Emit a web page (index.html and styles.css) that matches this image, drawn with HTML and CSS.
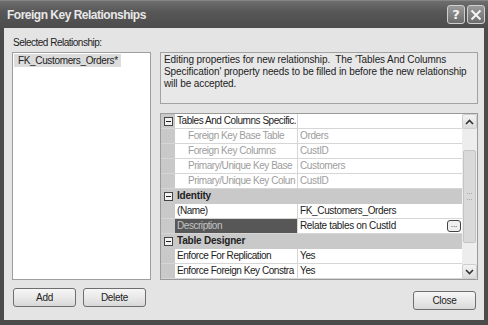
FILE: index.html
```html
<!DOCTYPE html>
<html lang="en">
  <head>
    <meta charset="UTF-8" />
    <title>Foreign Key Relationships</title>
    <link rel="stylesheet" href="styles.css">
  </head>
  <body>
    <div class="window">
      <!-- Barre de titre -->
      <header class="titlebar">
        <span class="title">Foreign Key Relationships</span>
        <div class="caption-buttons">
          <span class="caption-btn">?</span>
          <span class="caption-btn">
            <svg width="12" height="12" viewBox="0 0 12 12">
              <path d="M1.5 1.5 L10.5 10.5 M10.5 1.5 L1.5 10.5" stroke="#f4f4f4" stroke-width="2" fill="none" />
            </svg>
          </span>
        </div>
      </header>
      <!-- Contenu -->
      <main class="client">
        <section class="left-pane">
          <p class="label">Selected Relationship:</p>
          <div class="listbox">
            <div class="list-item">FK_Customers_Orders*</div>
          </div>
          <div class="left-buttons">
            <button class="btn">Add</button>
            <button class="btn">Delete</button>
          </div>
        </section>
        <section class="right-pane">
          <div class="description">
            Editing properties for new relationship.&nbsp; The 'Tables And Columns Specification' property needs to be filled in before the new relationship will be accepted.
          </div>
          <div class="prop-grid">
            <div class="prop-rows">
              <div class="row">
                <span class="gutter"><span class="toggle"></span></span>
                <span class="name">Tables And Columns Specific.</span>
                <span class="value"></span>
              </div>
              <div class="row sub">
                <span class="gutter"></span>
                <span class="name">Foreign Key Base Table</span>
                <span class="value">Orders</span>
              </div>
              <div class="row sub">
                <span class="gutter"></span>
                <span class="name">Foreign Key Columns</span>
                <span class="value">CustID</span>
              </div>
              <div class="row sub">
                <span class="gutter"></span>
                <span class="name">Primary/Unique Key Base</span>
                <span class="value">Customers</span>
              </div>
              <div class="row sub">
                <span class="gutter"></span>
                <span class="name">Primary/Unique Key Colun</span>
                <span class="value">CustID</span>
              </div>
              <div class="row category">
                <span class="gutter"><span class="toggle"></span></span>
                <span class="name">Identity</span>
              </div>
              <div class="row">
                <span class="gutter"></span>
                <span class="name">(Name)</span>
                <span class="value">FK_Customers_Orders</span>
              </div>
              <div class="row selected">
                <span class="gutter"></span>
                <span class="name">Description</span>
                <span class="value">Relate tables on CustId<span class="ellipsis">...</span></span>
              </div>
              <div class="row category">
                <span class="gutter"><span class="toggle"></span></span>
                <span class="name">Table Designer</span>
              </div>
              <div class="row">
                <span class="gutter"></span>
                <span class="name">Enforce For Replication</span>
                <span class="value">Yes</span>
              </div>
              <div class="row">
                <span class="gutter"></span>
                <span class="name">Enforce Foreign Key Constra</span>
                <span class="value">Yes</span>
              </div>
            </div>
            <!-- Barre de défilement -->
            <div class="scrollbar">
              <span class="scroll-btn">
                <svg width="9" height="6" viewBox="0 0 9 6"><path d="M1 5 L4.5 1.5 L8 5" stroke="#333" stroke-width="1.6" fill="none" /></svg>
              </span>
              <div class="scroll-track">
                <div class="scroll-thumb"><span class="grip"></span></div>
              </div>
              <span class="scroll-btn">
                <svg width="9" height="6" viewBox="0 0 9 6"><path d="M1 1 L4.5 4.5 L8 1" stroke="#333" stroke-width="1.6" fill="none" /></svg>
              </span>
            </div>
          </div>
          <div class="right-buttons">
            <button class="btn">Close</button>
          </div>
        </section>
      </main>
    </div>
  </body>
</html>
```

FILE: styles.css
```css
/* =============================================
   Réinitialisation
   ============================================= */
* {
  margin: 0;
  padding: 0;
  box-sizing: border-box;
}
body {
  font-family: "Liberation Sans", Arial, sans-serif;
  font-size: 10px;
  color: #222;
  background: #3e3e3e;
}
/* =============================================
   Fenêtre
   ============================================= */
.window {
  width: 488px;
  height: 325px;
  background: #4b4b4b;
  padding: 0 4px 5px 4px;
  display: flex;
  flex-direction: column;
}
.titlebar {
  height: 28px;
  margin: 0 -4px;
  padding: 0 3px 0 7px;
  display: flex;
  justify-content: space-between;
  align-items: center;
  background: linear-gradient(#6e6e6e, #575757 40%, #4c4c4c);
  border-top: 1px solid #858585;
}
.title {
  font-family: "Liberation Sans", Arial, sans-serif;
  font-weight: bold;
  font-size: 12px;
  color: #e8e8e8;
  letter-spacing: -0.5px;
}
.caption-buttons {
  display: flex;
  gap: 2px;
}
.caption-btn {
  width: 18px;
  height: 19px;
  display: flex;
  align-items: center;
  justify-content: center;
  border: 1px solid #cfcfcf;
  border-radius: 3px;
  background: linear-gradient(#9a9a9a, #6d6d6d);
  color: #f4f4f4;
  font-family: "DejaVu Sans", sans-serif;
  font-weight: bold;
  font-size: 13px;
}
/* =============================================
   Zone client
   ============================================= */
.client {
  flex: 1;
  background: #e4e4e4;
  display: flex;
  gap: 9px;
  padding: 9px 6px 0 8px;
}
.left-pane {
  width: 139px;
  display: flex;
  flex-direction: column;
}
.label {
  line-height: 12px;
  height: 12px;
  margin-left: 1px;
  letter-spacing: -0.5px;
}
.listbox {
  margin-top: 3px;
  height: 228px;
  background: #fff;
  border: 1px solid #9e9e9e;
  padding: 1px;
}
.list-item {
  display: inline-block;
  background: #dcdcdc;
  line-height: 13px;
  padding: 0 3px 0 4px;
  letter-spacing: -0.35px;
}
.left-buttons {
  display: flex;
  gap: 7px;
  margin-top: 8px;
  padding-left: 1px;
}
.btn {
  width: 63px;
  height: 19px;
  font-family: "Liberation Sans", Arial, sans-serif;
  font-size: 10px;
  letter-spacing: -0.3px;
  color: #222;
  border: 1px solid #6e6e6e;
  border-radius: 3px;
  background: linear-gradient(#f6f6f6, #e6e6e6 60%, #d8d8d8);
}
.right-pane {
  width: 318px;
  padding-top: 15px;
  display: flex;
  flex-direction: column;
}
.description {
  height: 52px;
  border: 1px solid #a2a2a2;
  background: #e8e8e8;
  padding: 1px 3px;
  line-height: 12px;
  letter-spacing: -0.1px;
}
/* =============================================
   Grille de propriétés
   ============================================= */
.prop-grid {
  margin-top: 9px;
  height: 167px;
  border: 1px solid #9a9a9a;
  display: flex;
  background: #fff;
}
.prop-rows {
  flex: 1;
}
.row {
  height: 15px;
  display: grid;
  grid-template-columns: 14px 122px 1fr;
  border-bottom: 1px solid #d6d6d6;
  line-height: 14px;
  letter-spacing: -0.35px;
}
.gutter {
  background: #c9c9c9;
  display: flex;
  align-items: center;
  justify-content: center;
}
.toggle {
  width: 9px;
  height: 9px;
  border: 1px solid #444;
  background: #f2f2f2;
  position: relative;
}
.toggle::after {
  content: "";
  position: absolute;
  left: 1px;
  right: 1px;
  top: 3px;
  height: 1px;
  background: #222;
}
.name {
  padding-left: 2px;
  white-space: nowrap;
  overflow: hidden;
  letter-spacing: -0.45px;
}
.value {
  border-left: 1px solid #d6d6d6;
  padding-left: 2px;
  white-space: nowrap;
  overflow: hidden;
  position: relative;
}
.row.sub .name {
  padding-left: 13px;
}
.row.sub .name,
.row.sub .value {
  color: #9d9d9d;
}
.row.category {
  background: #c9c9c9;
  border-bottom-color: #c9c9c9;
}
.row.category .name {
  grid-column: 2 / 4;
  font-weight: bold;
  letter-spacing: -0.2px;
}
.row.selected .name {
  background: #575757;
  color: #c4c4c4;
}
.ellipsis {
  position: absolute;
  right: 1px;
  top: 1px;
  width: 14px;
  height: 12px;
  border: 1px solid #444;
  border-radius: 3px;
  background: #efefef;
  font-size: 8px;
  line-height: 7px;
  text-align: center;
  letter-spacing: 0;
}
/* =============================================
   Barre de défilement
   ============================================= */
.scrollbar {
  width: 15px;
  display: flex;
  flex-direction: column;
  background: #ededed;
}
.scroll-btn {
  height: 15px;
  display: flex;
  align-items: center;
  justify-content: center;
  background: linear-gradient(#f3f3f3, #dcdcdc);
  border: 1px solid #cfcfcf;
  border-radius: 2px;
}
.scroll-track {
  flex: 1;
  padding-top: 21px;
}
.scroll-thumb {
  height: 93px;
  margin: 0 1px;
  border: 1px solid #c4c4c4;
  border-radius: 2px;
  background: #d9d9d9;
  display: flex;
  align-items: center;
  justify-content: center;
}
.grip {
  width: 5px;
  height: 7px;
  border-top: 1px dotted #aaa;
  border-bottom: 1px dotted #aaa;
}
.right-buttons {
  display: flex;
  justify-content: flex-end;
  margin-top: 11px;
  padding-right: 2px;
}
```
